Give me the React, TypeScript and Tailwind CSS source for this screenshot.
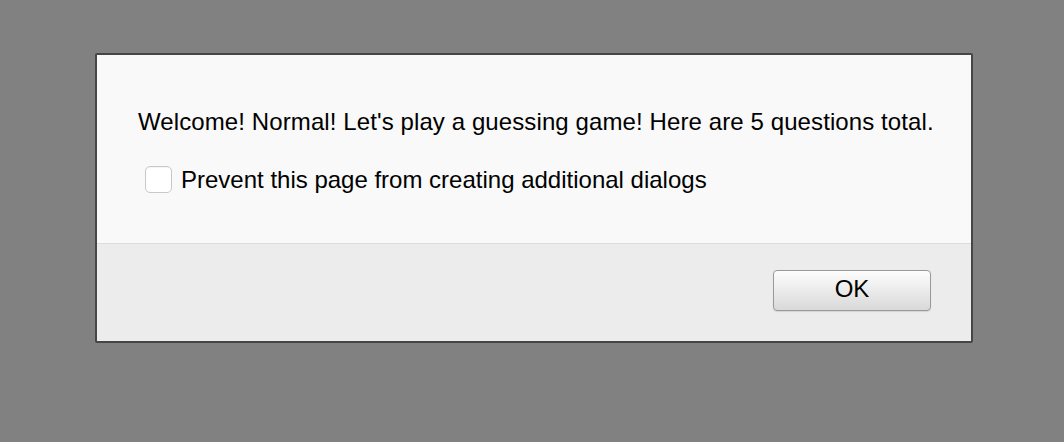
import React from 'react';

export default function App() {
  return (
    <div className="h-[442px] w-[1064px] bg-[#818181] pt-[53px] pl-[95px]" style={{ fontFamily: '"Liberation Sans", Arial, sans-serif' }}>
      <div className="flex h-[290px] w-[878px] flex-col overflow-hidden rounded-[2px] border-2 border-[#464646] bg-[#ececec]">
        <div className="h-[189px] border-b border-[#dcdcdc] bg-[#f9f9f9] pl-[41px] pt-[53px]">
          <p className="text-[24px] leading-[28px] tracking-[0.1px] text-black">
            Welcome! Normal! Let's play a guessing game! Here are 5 questions total.
          </p>
          <label className="mt-[30px] ml-[7px] flex h-[27px] items-center gap-[9px]">
            <span className="h-[27px] w-[27px] rounded-[5px] border border-[#c8c8c8] bg-white shadow-[inset_0_1px_1px_rgba(0,0,0,0.05)]" />
            <span className="text-[24px] leading-[28px] text-black">Prevent this page from creating additional dialogs</span>
          </label>
        </div>
        <div className="flex flex-1 items-start justify-end pr-[40px] pt-[26px]">
          <button className="h-[41px] w-[158px] rounded-[4px] border border-[#999] bg-gradient-to-b from-[#fdfdfd] to-[#d9d9d9] pb-[3px] text-[24px] leading-[28px] text-black shadow-[0_1px_1px_rgba(0,0,0,0.1)]">
            OK
          </button>
        </div>
      </div>
    </div>
  );
}
